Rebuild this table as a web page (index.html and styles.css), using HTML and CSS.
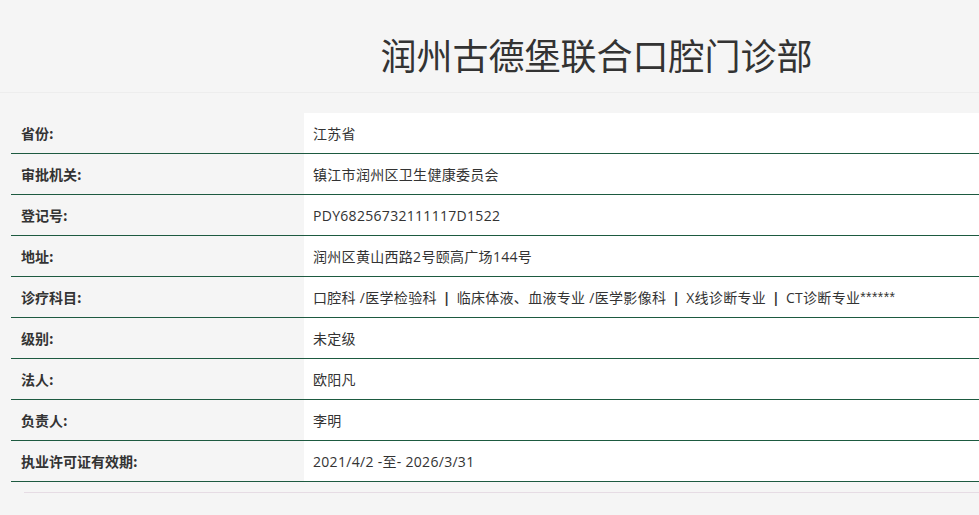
FILE: index.html
```html
<!DOCTYPE html>
<html lang="zh-CN">
<head>
<meta charset="utf-8">
<title>润州古德堡联合口腔门诊部</title>
<link rel="stylesheet" href="styles.css">
</head>
<body>
<div class="page">
  <header class="head">
    <h1 class="title">润州古德堡联合口腔门诊部</h1>
  </header>
  <div class="info">
    <div class="row"><div class="label">省份:</div><div class="value">江苏省</div></div>
    <div class="row"><div class="label">审批机关:</div><div class="value">镇江市润州区卫生健康委员会</div></div>
    <div class="row"><div class="label">登记号:</div><div class="value">PDY68256732111117D1522</div></div>
    <div class="row"><div class="label">地址:</div><div class="value">润州区黄山西路2号颐高广场144号</div></div>
    <div class="row"><div class="label">诊疗科目:</div><div class="value">口腔科 /医学检验科 <span class="sep">|</span> 临床体液、血液专业 /医学影像科 <span class="sep">|</span> X线诊断专业 <span class="sep">|</span> CT诊断专业<span class="stars">******</span></div></div>
    <div class="row"><div class="label">级别:</div><div class="value">未定级</div></div>
    <div class="row"><div class="label">法人:</div><div class="value">欧阳凡</div></div>
    <div class="row"><div class="label">负责人:</div><div class="value">李明</div></div>
    <div class="row"><div class="label">执业许可证有效期:</div><div class="value">2021/4/2 -至- 2026/3/31</div></div>
  </div>
  <div class="foot"></div>
</div>
</body>
</html>
```
FILE: styles.css
```css
html, body {
  margin: 0;
  padding: 0;
  background: #f5f5f5;
  overflow-x: hidden;
}
body {
  font-family: "Noto Sans CJK SC", "Noto Sans", sans-serif;
  color: #333;
}
.page {
  width: 1193px;
}
.head {
  height: 93px;
  box-sizing: border-box;
  border-bottom: 1px solid #ededed;
  display: flex;
  justify-content: center;
  padding-top: 36px;
}
.title {
  margin: 0;
  font-size: 36px;
  font-weight: 400;
  color: #333;
  line-height: 36px;
  height: 36px;
}
.info {
  margin: 20px 0 0 11px;
}
.row {
  display: flex;
  height: 40px;
  border-bottom: 1px solid #1d5a40;
}
.label {
  width: 283px;
  padding-left: 10px;
  display: flex;
  align-items: center;
  font-size: 14px;
  font-weight: 700;
  color: #333;
}
.value {
  flex: 1;
  background: #fff;
  padding-left: 9px;
  display: flex;
  align-items: center;
  font-family: "Open Sans", "Noto Sans CJK SC", sans-serif;
  font-size: 14px;
  letter-spacing: 0.3px;
  color: #333;
  white-space: pre;
}
.sep {
  font-weight: 700;
  margin: 0 2px;
}
.stars {
  font-family: "Liberation Sans", sans-serif;
  letter-spacing: 0.4px;
}
.foot {
  margin: 10px 0 0 24px;
  border-top: 1px solid #e6dce4;
  height: 20px;
}
```
